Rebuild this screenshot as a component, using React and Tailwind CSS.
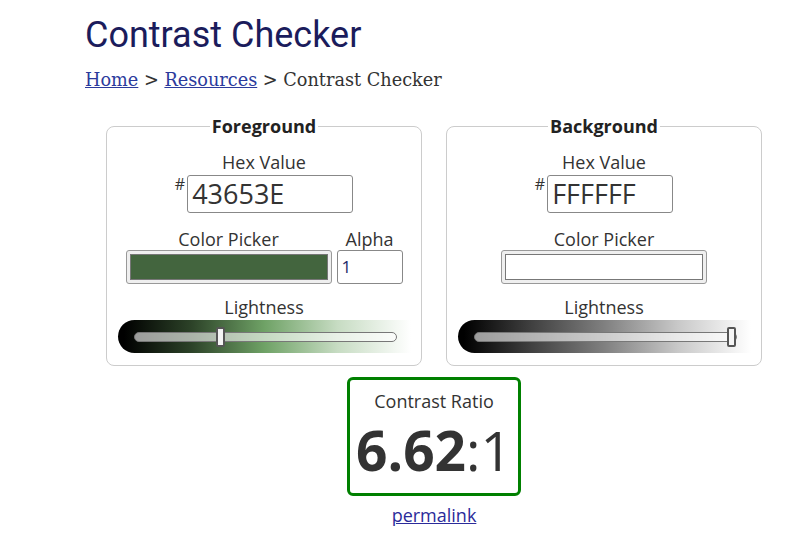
import React from "react";

function Slider({ gradient, thumbLeft }) {
  return (
    <div className="relative mx-auto h-[33px] w-[293px] rounded-l-full" style={{ background: gradient }}>
      <div className="absolute left-[16px] right-[14px] top-[12px] h-[10px] rounded-full border border-[#777] bg-white/60" />
      <div
        className="absolute top-[7px] h-[20px] w-[9px] rounded-[2px] border-2 border-[#555] bg-[#f4f4f4]"
        style={{ left: thumbLeft }}
      />
    </div>
  );
}

function ColorSwatch({ color, width }) {
  return (
    <div className={`${width} h-[34px] rounded-[3px] border border-[#999] bg-[#efefef] p-[3px]`}>
      <div className="h-full w-full border border-[#777]" style={{ background: color }} />
    </div>
  );
}

function Panel({ title, hex, inputWidth, color, gradient, thumbLeft, alpha }) {
  return (
    <fieldset className="w-[316px] rounded-lg border border-[#ccc] px-[9px] pb-[12px] pt-[13px]">
      <legend className="mx-auto px-[2px] text-[18px] font-bold leading-[24px] text-[#222]">{title}</legend>
      <div className="text-center text-[18px] leading-[22px] text-[#333]">Hex Value</div>
      <div className="mt-[2px] flex justify-center">
        <span className="mr-[2px] mt-[1px] text-[16px] leading-[16px] text-[#333]">#</span>
        <div
          className={`${inputWidth} h-[38px] rounded-[3px] border border-[#888] pl-[4px] text-[27px] leading-[36px] text-[#333]`}
        >
          {hex}
        </div>
      </div>
      <div className="mt-[15px] flex justify-center gap-[5px]">
        <div className="flex flex-col items-center">
          <div className="text-[18px] leading-[22px] text-[#333]">Color Picker</div>
          <ColorSwatch color={color} width="w-[206px]" />
        </div>
        {alpha && (
          <div className="flex flex-col items-center">
            <div className="text-[18px] leading-[22px] text-[#333]">Alpha</div>
            <div className="h-[34px] w-[66px] rounded-[3px] border border-[#888] pl-[4px] text-[17px] leading-[32px] text-[#1a2a6a]">
              1
            </div>
          </div>
        )}
      </div>
      <div className="mt-[12px] text-center text-[18px] leading-[22px] text-[#333]">Lightness</div>
      <div className="mt-[2px]">
        <Slider gradient={gradient} thumbLeft={thumbLeft} />
      </div>
    </fieldset>
  );
}

export default function App() {
  return (
    <div className="min-h-[534px] w-[790px] bg-white" style={{ fontFamily: '"Open Sans", sans-serif' }}>
      <div className="ml-[85px] w-[698px] pt-[12px]">
        <h1
          className="text-[36px] leading-[46px] text-[#1b1c5c]"
          style={{ fontFamily: "Roboto, sans-serif" }}
        >
          Contrast Checker
        </h1>
        <div
          className="mt-[10px] text-[17.7px] leading-[24px] text-[#333]"
          style={{ fontFamily: '"DejaVu Serif", serif' }}
        >
          <a href="#" className="text-[#2b3a9c] underline">Home</a>
          {" > "}
          <a href="#" className="text-[#2b3a9c] underline">Resources</a>
          {" > Contrast Checker"}
        </div>
        <div className="mt-[22px] flex justify-center gap-6">
          <Panel
            title="Foreground"
            hex="43653E"
            inputWidth="w-[166px]"
            color="#43653E"
            gradient="linear-gradient(to right, #000 2%, #2c4228 25%, #6fa266 50%, #c7dcc3 75%, rgba(255,255,255,0.3) 100%)"
            thumbLeft="98px"
            alpha
          />
          <Panel
            title="Background"
            hex="FFFFFF"
            inputWidth="w-[126px]"
            color="#FFFFFF"
            gradient="linear-gradient(to right, #000 2%, #404040 25%, #808080 50%, #c8c8c8 75%, rgba(255,255,255,0.3) 100%)"
            thumbLeft="269px"
          />
        </div>
        <div className="mt-[11px] flex flex-col items-center">
          <div className="flex h-[119px] w-[174px] flex-col items-center rounded-md border-[3px] border-[#008000] pt-[9px]">
            <div className="text-[18px] leading-[24px] text-[#333]">Contrast Ratio</div>
            <div className="mt-[4px] text-[55px] leading-[66px] text-[#333]">
              <span className="font-bold">6.62</span>:1
            </div>
          </div>
          <a href="#" className="mt-[7px] text-[18px] leading-[24px] text-[#2b2b9a] underline">permalink</a>
        </div>
      </div>
    </div>
  );
}
